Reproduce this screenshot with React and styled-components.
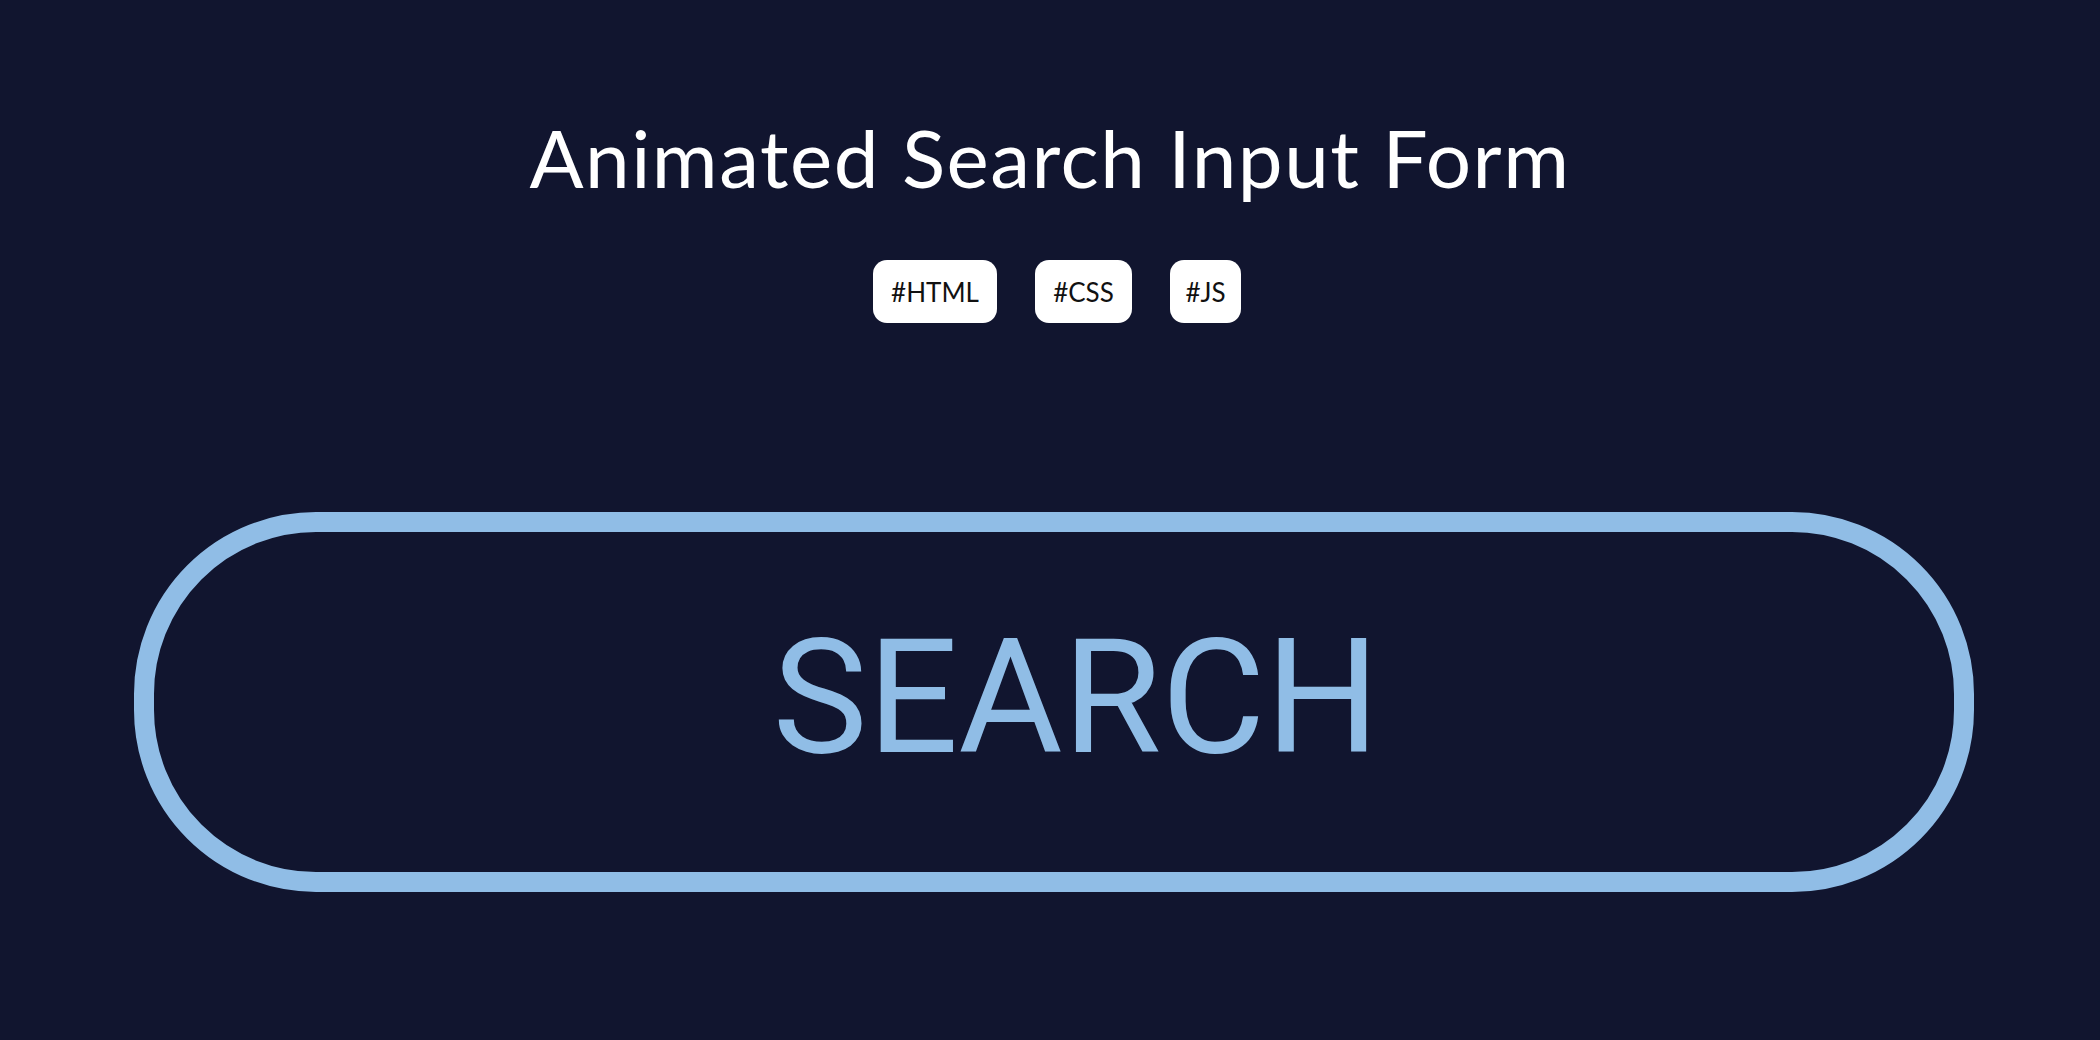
import React, { useState } from "react";
import styled, { createGlobalStyle } from "styled-components";

const GlobalStyle = createGlobalStyle`
  html, body {
    margin: 0;
    padding: 0;
    background: #11152f;
  }
`;

const Page = styled("div")`
  display: flex;
  flex-direction: column;
  align-items: center;
  min-height: 100vh;
  padding-top: 109px;
  box-sizing: border-box;
  background: #11152f;
`;

const Title = styled("h1")`
  margin: 0;
  font-family: Lato, "Open Sans", sans-serif;
  font-weight: 400;
  font-size: 80px;
  line-height: 96px;
  color: #ffffff;
  letter-spacing: 1.5px;
`;

const Tags = styled("div")`
  display: flex;
  gap: 38px;
  margin-top: 55px;
  margin-left: 14px;
`;

const Tag = styled("span")`
  display: flex;
  align-items: center;
  justify-content: center;
  height: 63px;
  width: ${({ width }) => width}px;
  box-sizing: border-box;
  background: #ffffff;
  border-radius: 14px;
  font-family: Lato, "Open Sans", sans-serif;
  font-size: 26px;
  color: #111111;
`;

const Form = styled("form")`
  margin-top: 189px;
  display: flex;
  justify-content: center;
  width: 100%;
`;

const SearchInput = styled("input")`
  width: 1840px;
  height: 380px;
  box-sizing: border-box;
  border: 20px solid #90bde6;
  border-radius: 182px;
  background: transparent;
  padding: 0 0 10px 44px;
  margin-left: 8px;
  outline: none;
  text-align: center;
  font-family: Roboto, "Liberation Sans", sans-serif;
  font-size: 160px;
  color: #90bde6;
  &::placeholder {
    color: #90bde6;
    opacity: 1;
  }
`;

const tags = [
  { label: "#HTML", width: 124 },
  { label: "#CSS", width: 97 },
  { label: "#JS", width: 71 },
];

export default () => {
  const [query, setQuery] = useState("");

  return (
    <Page>
      <GlobalStyle />
      <Title>Animated Search Input Form</Title>
      <Tags>
        {tags.map(tag => (
          <Tag key={tag.label} width={tag.width}>
            {tag.label}
          </Tag>
        ))}
      </Tags>
      <Form onSubmit={e => e.preventDefault()}>
        <SearchInput
          type="text"
          placeholder="SEARCH"
          value={query}
          onChange={e => setQuery(e.target.value)}
        />
      </Form>
    </Page>
  );
};
